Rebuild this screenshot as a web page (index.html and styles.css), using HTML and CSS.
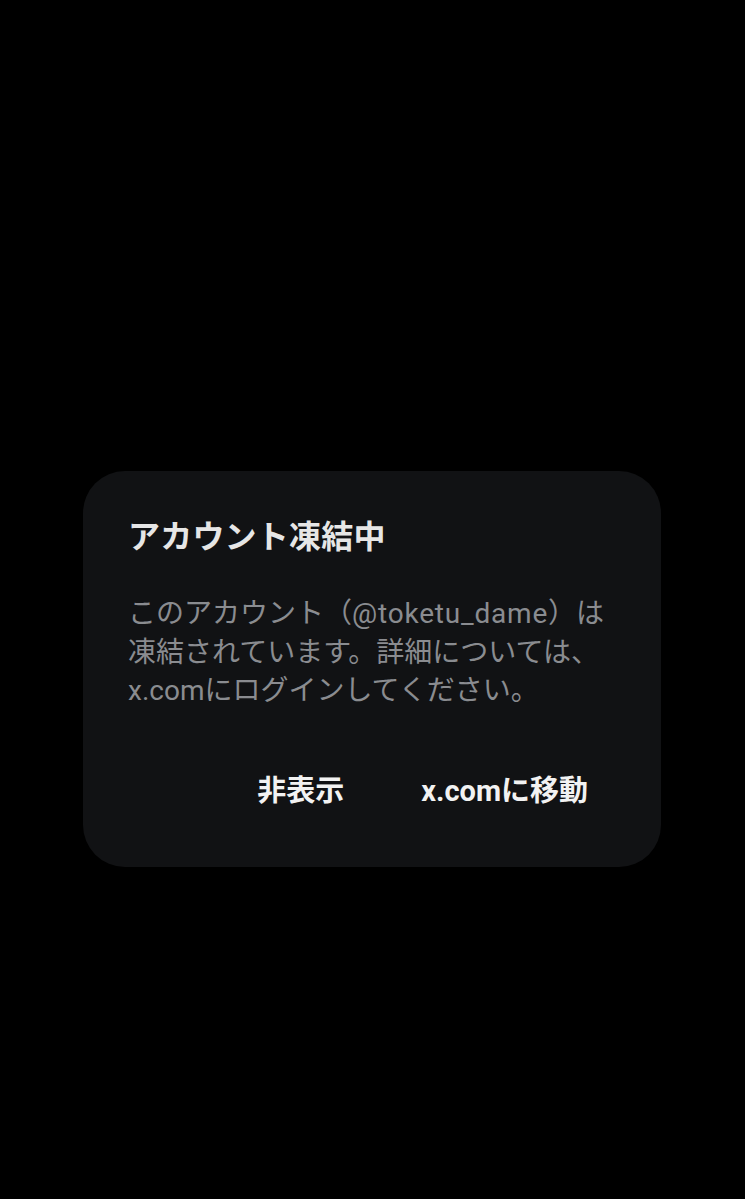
FILE: index.html
```html
<!DOCTYPE html>
<html lang="ja">
<head>
<meta charset="utf-8">
<link rel="stylesheet" href="styles.css">
</head>
<body>
<div class="screen">
  <div class="dialog">
    <h1 class="title">アカウント凍結中</h1>
    <p class="message">このアカウント（<span class="handle">@toketu_dame</span>）は凍結されています。詳細については、x.comにログインしてください。</p>
    <div class="actions">
      <span class="btn">非表示</span>
      <span class="btn">x.comに移動</span>
    </div>
  </div>
</div>
</body>
</html>
```
FILE: styles.css
```css
html, body {
  margin: 0;
  padding: 0;
  background: #000;
}
.screen {
  width: 745px;
  height: 1199px;
  padding-top: 471px;
  box-sizing: border-box;
  font-family: Roboto, "Noto Sans CJK JP", sans-serif;
}
.dialog {
  margin-left: 83px;
  width: 578px;
  height: 396px;
  box-sizing: border-box;
  background: #111214;
  border-radius: 42px;
  padding: 46px 45px 0 45px;
}
.title {
  margin: 0;
  font-size: 32px;
  line-height: 40px;
  font-weight: 700;
  color: #e6e6e6;
  letter-spacing: 0.2px;
}
.message {
  margin: 38px 0 0 0;
  font-size: 28px;
  line-height: 38.5px;
  color: #8a8c90;
}
.handle {
  letter-spacing: 0.8px;
}
.actions {
  display: flex;
  justify-content: flex-end;
  gap: 77px;
  margin-top: 60px;
  padding-right: 28px;
}
.btn {
  font-size: 29px;
  line-height: 40px;
  font-weight: 700;
  color: #f2f2f2;
}
```
